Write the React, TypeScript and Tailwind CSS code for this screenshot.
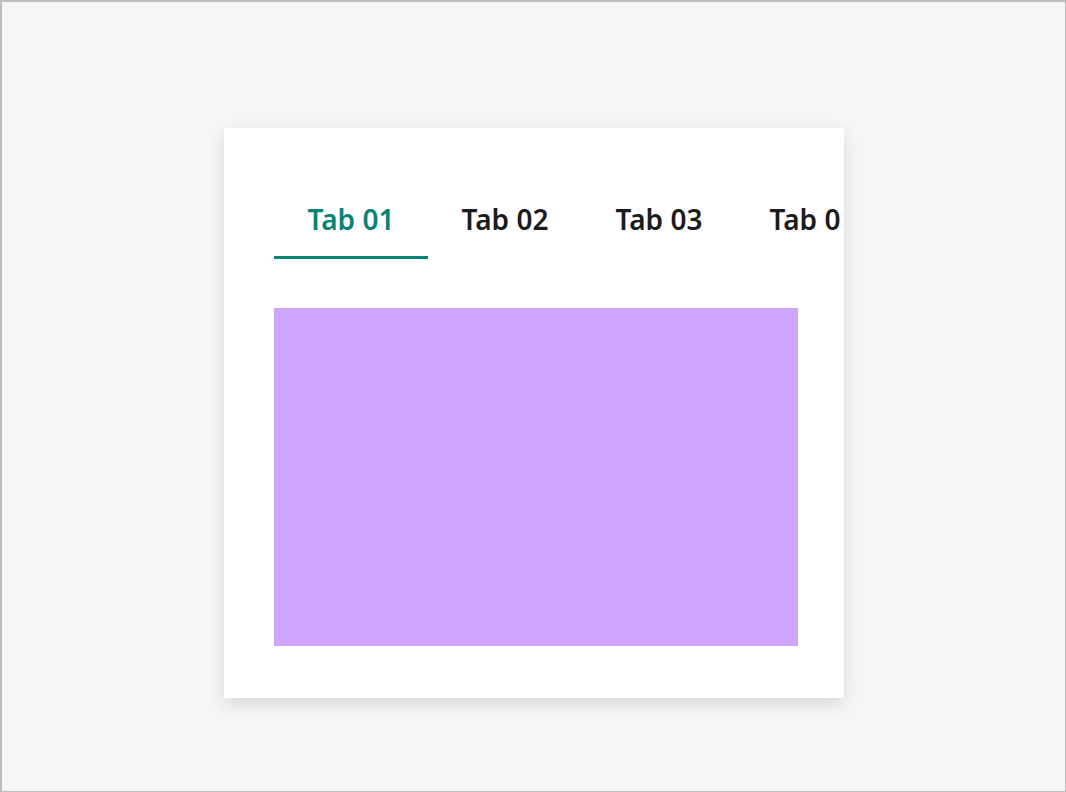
import React, { useState } from "react";

const tabs = ["Tab 01", "Tab 02", "Tab 03", "Tab 04"];

export default function App() {
  const [active, setActive] = useState(0);
  return (
    <div
      className="box-border h-[792px] w-full border-t-2 border-l-2 border-r border-b border-[#bdbdbd] bg-[#f6f6f6] pl-[222px] pt-[126px]"
      style={{ fontFamily: '"Noto Sans", "Open Sans", sans-serif' }}
    >
      <div className="w-[620px] bg-white pl-[50px] pr-[46px] pt-[50px] pb-[52px] shadow-[0_6px_16px_rgba(0,0,0,0.12)]">
        <div className="flex w-[566px] overflow-hidden">
          {tabs.map((t, i) => (
            <button
              key={t}
              onClick={() => setActive(i)}
              className={
                i === active
                  ? "w-[154px] shrink-0 border-b-[3px] border-[#088374] pt-[21px] pb-[17px] text-[28px] leading-[40px] font-semibold text-[#088374] whitespace-nowrap"
                  : "w-[154px] shrink-0 border-b-[3px] border-transparent pt-[21px] pb-[17px] text-[28px] leading-[40px] font-semibold text-[#1c1c1c] whitespace-nowrap"
              }
            >
              {t}
            </button>
          ))}
        </div>
        <div className="mt-[49px] h-[338px] w-[524px] bg-[#cfa4fe]" />
      </div>
    </div>
  );
}
